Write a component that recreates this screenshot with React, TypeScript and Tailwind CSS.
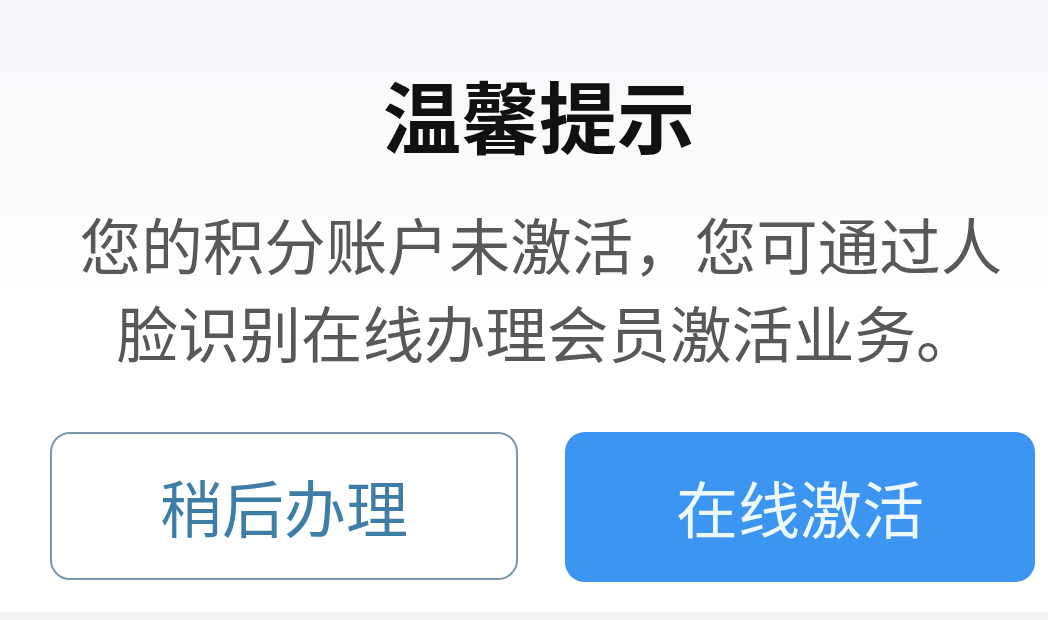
export default function App() {
  return (
    <div
      className="flex h-[620px] w-full flex-col bg-gradient-to-b from-[#f4f6f9] via-white to-white"
      style={{ fontFamily: '"Noto Sans CJK SC", "Noto Sans", sans-serif' }}
    >
      <div className="flex flex-1 flex-col items-center pt-[71px]">
        <div className="flex w-full flex-col items-center pl-[34px]">
          <h1 className="-ml-[4px] text-[78px] font-bold leading-[86px] text-[#111111]">温馨提示</h1>
          <p className="mt-[43px] text-center text-[61.5px] leading-[88px] text-[#585858]">
            <span className="block">您的积分账户未激活，您可通过人</span>
            <span className="block pl-[12px]">脸识别在线办理会员激活业务。</span>
          </p>
        </div>
        <div className="mt-[56px] flex w-full gap-[47px] pl-[50px] pr-[13px]">
          <button className="flex h-[148px] w-[468px] items-center justify-center rounded-[20px] border-2 border-[#7c97a8] bg-white text-[62px] text-[#3e7da6]">
            稍后办理
          </button>
          <button className="flex h-[150px] w-[470px] items-center justify-center rounded-[20px] bg-[#3b95f1] text-[62px] text-[#eef8ff]">
            在线激活
          </button>
        </div>
      </div>
      <div className="h-[8px] bg-[#f1f2f4]" />
    </div>
  );
}
